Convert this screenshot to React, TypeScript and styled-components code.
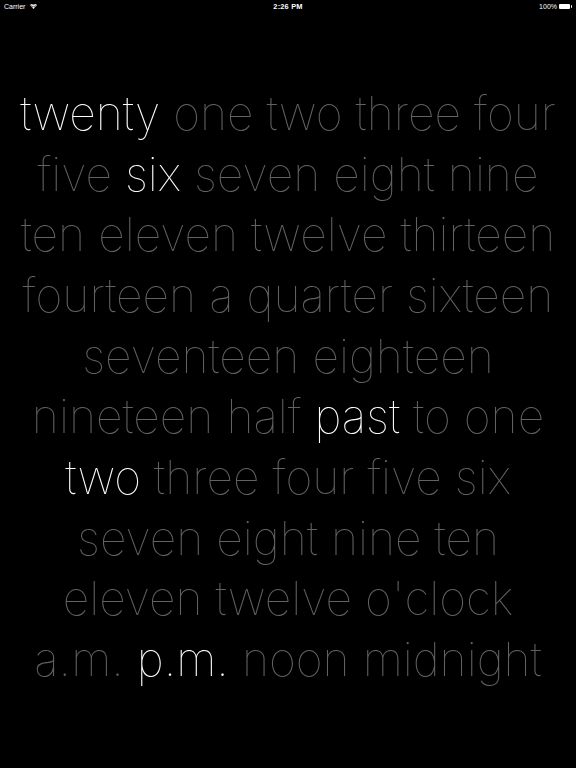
import React from "react";
import styled, { createGlobalStyle } from "styled-components";

const GlobalStyle = createGlobalStyle`
  html, body { margin: 0; padding: 0; background: #000; }
  #root { width: 576px; height: 768px; }
`;

const Screen = styled.div`
  width: 576px;
  height: 768px;
  background: #000;
  display: flex;
  flex-direction: column;
  overflow: hidden;
`;

const StatusBar = styled.div`
  height: 11px;
  padding: 1px 4px 0 4px;
  display: grid;
  grid-template-columns: 1fr auto 1fr;
  align-items: center;
  color: #fff;
  font-family: "Liberation Sans", Arial, sans-serif;
  font-size: 7px;
`;

const Left = styled.div`
  display: flex;
  align-items: center;
  gap: 5px;
`;

const Center = styled.div`
  font-weight: 700;
  font-size: 7.4px;
  letter-spacing: 0.2px;
`;

const Right = styled.div`
  display: flex;
  align-items: center;
  justify-content: flex-end;
  gap: 2px;
`;

const Battery = styled.div`
  display: flex;
  align-items: center;
`;

const BatteryBody = styled.div`
  width: 11px;
  height: 5px;
  background: #fff;
  border-radius: 1px;
`;

const BatteryNub = styled.div`
  width: 1.5px;
  height: 2.5px;
  margin-left: 0.5px;
  background: #fff;
  border-radius: 0 1px 1px 0;
`;

const Clock = styled.div`
  padding-top: 71px;
  font-family: "Inter", "Helvetica Neue", sans-serif;
  font-weight: 130;
  font-size: 46.3px;
  line-height: 60.65px;
  text-align: center;
  white-space: nowrap;
  -webkit-font-smoothing: antialiased;
  will-change: transform;
`;

const Line = styled.div`
  color: #626262;
`;

const Word = styled.span<{ $on?: boolean }>`
  color: ${(p) => (p.$on ? "#ffffff" : "#626262")};
`;

const lines: { t: string; on?: boolean }[][] = [
  [{ t: "twenty", on: true }, { t: "one" }, { t: "two" }, { t: "three" }, { t: "four" }],
  [{ t: "five" }, { t: "six", on: true }, { t: "seven" }, { t: "eight" }, { t: "nine" }],
  [{ t: "ten" }, { t: "eleven" }, { t: "twelve" }, { t: "thirteen" }],
  [{ t: "fourteen" }, { t: "a" }, { t: "quarter" }, { t: "sixteen" }],
  [{ t: "seventeen" }, { t: "eighteen" }],
  [{ t: "nineteen" }, { t: "half" }, { t: "past", on: true }, { t: "to" }, { t: "one" }],
  [{ t: "two", on: true }, { t: "three" }, { t: "four" }, { t: "five" }, { t: "six" }],
  [{ t: "seven" }, { t: "eight" }, { t: "nine" }, { t: "ten" }],
  [{ t: "eleven" }, { t: "twelve" }, { t: "o'clock" }],
  [{ t: "a.m." }, { t: "p.m.", on: true }, { t: "noon" }, { t: "midnight" }],
];

const Wifi = () => (
  <svg width="7" height="5" viewBox="0 0 14 10">
    <path d="M7 10 L4.6 7.4 A3.4 3.4 0 0 1 9.4 7.4 Z" fill="#fff" />
    <path d="M3.3 6.1 A5.3 5.3 0 0 1 10.7 6.1 L9.6 7.2 A3.8 3.8 0 0 0 4.4 7.2 Z" fill="#fff" />
    <path d="M1.4 4.2 A8 8 0 0 1 12.6 4.2 L11.4 5.4 A6.3 6.3 0 0 0 2.6 5.4 Z" fill="#fff" />
    <path d="M-0.4 2.3 A10.6 10.6 0 0 1 14.4 2.3 L13.2 3.5 A8.9 8.9 0 0 0 0.8 3.5 Z" fill="#fff" />
  </svg>
);

export default function App() {
  return (
    <>
      <GlobalStyle />
      <Screen>
        <StatusBar>
          <Left>
            <span>Carrier</span>
            <Wifi />
          </Left>
          <Center>2:26 PM</Center>
          <Right>
            <span>100%</span>
            <Battery>
              <BatteryBody />
              <BatteryNub />
            </Battery>
          </Right>
        </StatusBar>
        <Clock>
          {lines.map((ln, i) => (
            <Line key={i}>
              {ln.map((w, j) => (
                <React.Fragment key={j}>
                  {j > 0 && " "}
                  <Word $on={w.on}>{w.t}</Word>
                </React.Fragment>
              ))}
            </Line>
          ))}
        </Clock>
      </Screen>
    </>
  );
}
